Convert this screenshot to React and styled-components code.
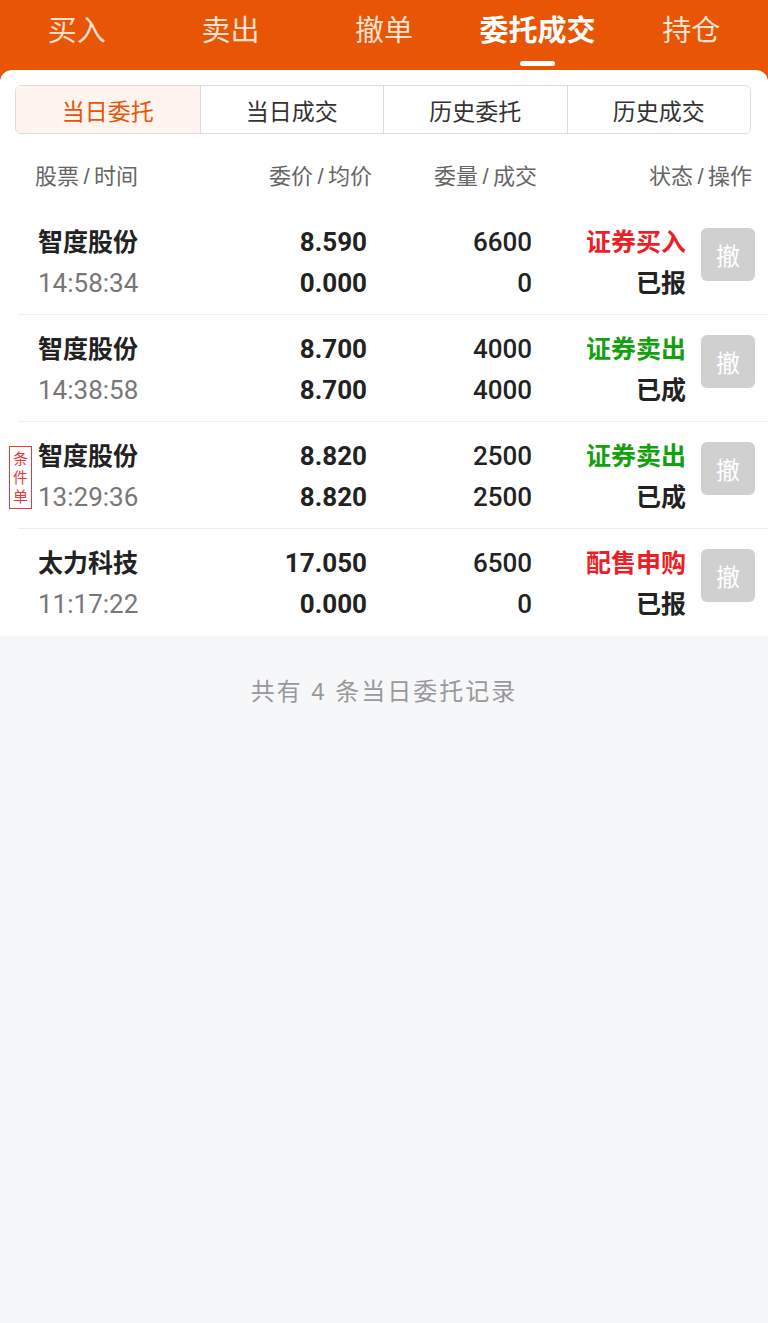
import styled, { createGlobalStyle } from "styled-components";

const GlobalStyle = createGlobalStyle`
  * { box-sizing: border-box; }
  body {
    margin: 0;
    background: #f6f7f9;
    font-family: "Liberation Sans", "Noto Sans CJK SC", sans-serif;
  }
`;

const Page = styled.div`
  width: 768px;
  min-height: 1323px;
  background: linear-gradient(#e85505 0, #e85505 90px, #f6f7f9 90px);
`;

const TopTabs = styled.div`
  display: grid;
  grid-template-columns: repeat(5, 1fr);
  height: 70px;
`;

const TopTab = styled.div`
  display: flex;
  flex-direction: column;
  align-items: center;
  padding-top: 12px;
  font-size: 29px;
  line-height: 38px;
  color: ${(p) => (p.$active ? "#ffffff" : "rgba(255, 240, 230, 0.92)")};
  font-weight: ${(p) => (p.$active ? 700 : 400)};
`;

const Indicator = styled.span`
  margin-top: 11px;
  width: 35px;
  height: 5px;
  border-radius: 3px;
  background: ${(p) => (p.$show ? "#ffffff" : "transparent")};
`;

const Card = styled.div`
  background: #ffffff;
  border-radius: 12px 12px 0 0;
  padding-top: 15px;
`;

const Segments = styled.div`
  display: grid;
  grid-template-columns: repeat(4, 1fr);
  margin: 0 17px 0 15px;
  height: 49px;
  border: 1px solid #e2dbd9;
  border-radius: 6px;
  overflow: hidden;
`;

const Segment = styled.div`
  display: flex;
  align-items: center;
  justify-content: center;
  font-size: 23px;
  color: ${(p) => (p.$active ? "#e85505" : "#333333")};
  background: ${(p) => (p.$active ? "#fff4f0" : "#ffffff")};
  & + & {
    border-left: 1px solid #dcdce2;
  }
`;

const HeaderRow = styled.div`
  display: grid;
  grid-template-columns: 195px 142px 165px 215px;
  padding: 28px 16px 16px 35px;
  font-size: 22px;
  line-height: 30px;
  color: #666666;
`;

const HeadCell = styled.div`
  text-align: ${(p) => (p.$left ? "left" : "right")};
  white-space: pre;
`;

const Row = styled.div`
  position: relative;
  display: grid;
  grid-template-columns: 192px 137px 165px 154px 54px;
  margin-left: 18px;
  padding: 14px 13px 11px 20px;
  height: 107px;
  border-bottom: ${(p) => (p.$last ? "none" : "1px solid #eeeeee")};
`;

const Cell = styled.div`
  display: flex;
  flex-direction: column;
  align-items: ${(p) => (p.$left ? "flex-start" : "flex-end")};
`;

const Text = styled.div`
  font-size: 25px;
  line-height: 41px;
  font-weight: 700;
  color: ${(p) => p.$color || "#222222"};
  white-space: nowrap;
`;

const Num = styled.div`
  font-family: Roboto, "Liberation Sans", sans-serif;
  font-size: 26px;
  line-height: 41px;
  font-weight: ${(p) => p.$weight || 500};
  color: ${(p) => p.$color || "#222222"};
  white-space: nowrap;
`;

const CancelButton = styled.div`
  margin-left: 15px;
  margin-top: 6px;
  width: 54px;
  height: 53px;
  border-radius: 6px;
  background: #d0d0d0;
  color: #ffffff;
  font-size: 24px;
  display: flex;
  align-items: center;
  justify-content: center;
`;

const Badge = styled.div`
  position: absolute;
  left: -9px;
  top: 24px;
  width: 23px;
  height: 63px;
  border: 1px solid #e53a3a;
  color: #e53a3a;
  font-size: 15px;
  line-height: 19px;
  display: flex;
  flex-direction: column;
  align-items: center;
  justify-content: center;
`;

const Footer = styled.div`
  padding-top: 38px;
  text-align: center;
  font-size: 24px;
  line-height: 36px;
  letter-spacing: 2px;
  color: #999999;
`;

const RED = "#ec1f26";
const GREEN = "#13a10e";

const orders = [
  { name: "智度股份", time: "14:58:34", price: "8.590", avg: "0.000", qty: "6600", done: "0", type: "证券买入", color: RED, state: "已报" },
  { name: "智度股份", time: "14:38:58", price: "8.700", avg: "8.700", qty: "4000", done: "4000", type: "证券卖出", color: GREEN, state: "已成" },
  { name: "智度股份", time: "13:29:36", price: "8.820", avg: "8.820", qty: "2500", done: "2500", type: "证券卖出", color: GREEN, state: "已成", badge: true },
  { name: "太力科技", time: "11:17:22", price: "17.050", avg: "0.000", qty: "6500", done: "0", type: "配售申购", color: RED, state: "已报" },
];

const tabs = ["买入", "卖出", "撤单", "委托成交", "持仓"];
const segments = ["当日委托", "当日成交", "历史委托", "历史成交"];
const heads = ["股票\u2009/\u2009时间", "委价\u2009/\u2009均价", "委量\u2009/\u2009成交", "状态\u2009/\u2009操作"];

const App = () => {
  return (
    <Page>
      <GlobalStyle />
      <TopTabs>
        {tabs.map((t) => (
          <TopTab key={t} $active={t === "委托成交"}>
            {t}
            <Indicator $show={t === "委托成交"} />
          </TopTab>
        ))}
      </TopTabs>
      <Card>
        <Segments>
          {segments.map((s, i) => (
            <Segment key={s} $active={i === 0}>
              {s}
            </Segment>
          ))}
        </Segments>
        <HeaderRow>
          {heads.map((h, i) => (
            <HeadCell key={h} $left={i === 0}>
              {h}
            </HeadCell>
          ))}
        </HeaderRow>
        {orders.map((o, i) => (
          <Row key={i} $last={i === orders.length - 1}>
            {o.badge && (
              <Badge>
                <span>条</span>
                <span>件</span>
                <span>单</span>
              </Badge>
            )}
            <Cell $left>
              <Text>{o.name}</Text>
              <Num $weight={400} $color="#777777">{o.time}</Num>
            </Cell>
            <Cell>
              <Num $weight={700}>{o.price}</Num>
              <Num $weight={700}>{o.avg}</Num>
            </Cell>
            <Cell>
              <Num>{o.qty}</Num>
              <Num>{o.done}</Num>
            </Cell>
            <Cell>
              <Text $color={o.color}>{o.type}</Text>
              <Text>{o.state}</Text>
            </Cell>
            <CancelButton>撤</CancelButton>
          </Row>
        ))}
      </Card>
      <Footer>共有 4 条当日委托记录</Footer>
    </Page>
  );
};

export default App;
